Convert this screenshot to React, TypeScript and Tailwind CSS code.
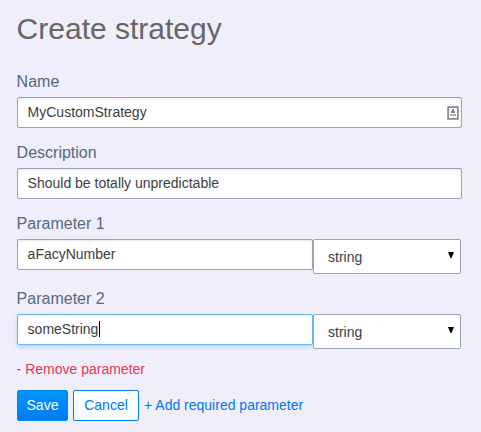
import React from "react";

const fieldBase =
  "flex h-[31px] items-center rounded-[2px] border bg-white pb-[2px] pl-[9.6px] text-sm text-[#3d3d3d]";

function Label({ children }: { children: React.ReactNode }) {
  return <div className="-ml-[0.4px] h-6 text-base leading-6 text-[#546a80]">{children}</div>;
}

function Field({
  value,
  focused = false,
  children,
}: {
  value: string;
  focused?: boolean;
  children?: React.ReactNode;
}) {
  return (
    <div
      className={
        fieldBase +
        (focused
          ? " border-[#69b5f0] shadow-[inset_0_1px_2px_rgba(0,0,0,0.08),0_2px_4px_rgba(105,181,240,0.4)]"
          : " border-[#98a4b0] shadow-[inset_0_1px_2px_rgba(0,0,0,0.1)]")
      }
    >
      <span className="leading-4">{value}</span>
      {focused && <span className="ml-[0.6px] h-4 w-px bg-black" />}
      {children}
    </div>
  );
}

function TypeSelect() {
  return (
    <div className="flex h-[35px] w-[148px] items-center justify-between rounded-[2px] border border-[#98a4b0] bg-white pr-[6px] pl-[14px] text-sm text-[#3d3d3d]">
      <span className="leading-4">string</span>
      <svg width="6" height="6" viewBox="0 0 6 6" className="mb-[3px]">
        <path d="M0 0H6L3.5 6H2.5Z" fill="#000" />
      </svg>
    </div>
  );
}

function ParameterRow({ value, focused }: { value: string; focused?: boolean }) {
  return (
    <div className="grid grid-cols-[296px_148px] items-start">
      <Field value={value} focused={focused} />
      <TypeSelect />
    </div>
  );
}

function ContactIcon() {
  return (
    <svg width="12" height="14" viewBox="0 0 12 14" className="mt-[2px] mr-[2px] ml-auto">
      <rect x="1.1" y="1.1" width="9.8" height="11.8" fill="#fff" stroke="#868686" strokeWidth="1.7" />
      <rect x="5" y="3" width="2" height="2" fill="#868686" />
      <rect x="4" y="5" width="4" height="2" fill="#868686" />
      <rect x="3" y="8" width="6" height="2" fill="#b0b0b0" />
    </svg>
  );
}

export default function App() {
  return (
    <main className="h-[432px] w-[481px] overflow-hidden bg-[#f0eefa] pl-[17px] font-['Liberation_Sans',Arial,sans-serif]">
      <h1 className="-ml-[0.4px] pt-[11px] text-[30px] leading-9 text-[#666]">Create strategy</h1>
      <div className="mt-[23px] w-[445px]">
        <Label>Name</Label>
        <div className="mt-[3px]">
          <Field value="MyCustomStrategy">
            <ContactIcon />
          </Field>
        </div>
      </div>
      <div className="mt-[13px] w-[445px]">
        <Label>Description</Label>
        <div className="mt-[3px]">
          <Field value="Should be totally unpredictable" />
        </div>
      </div>
      <div className="mt-[13px]">
        <Label>Parameter 1</Label>
        <div className="mt-[3px]">
          <ParameterRow value="aFacyNumber" />
        </div>
      </div>
      <div className="mt-[13px]">
        <Label>Parameter 2</Label>
        <div className="mt-[3px]">
          <ParameterRow value="someString" focused />
        </div>
      </div>
      <a className="mt-[10px] -ml-[0.4px] block text-sm leading-5 text-[#e8374f]">
        - Remove parameter
      </a>
      <div className="mt-[11px] flex items-center text-sm">
        <button className="h-[31px] w-[51px] rounded-[2px] border border-[#0084f5] bg-linear-to-b from-[#0096ff] to-[#007af0] pb-[2px] text-white">
          Save
        </button>
        <button className="ml-[5px] h-[31px] w-[66px] rounded-[2px] border border-[#0078f0] bg-linear-to-b from-white to-[#f5fbff] pb-[2px] text-[#0078f0]">
          Cancel
        </button>
        <a className="ml-[5px] pb-[2px] text-[#0078f0]">+ Add required parameter</a>
      </div>
    </main>
  );
}
